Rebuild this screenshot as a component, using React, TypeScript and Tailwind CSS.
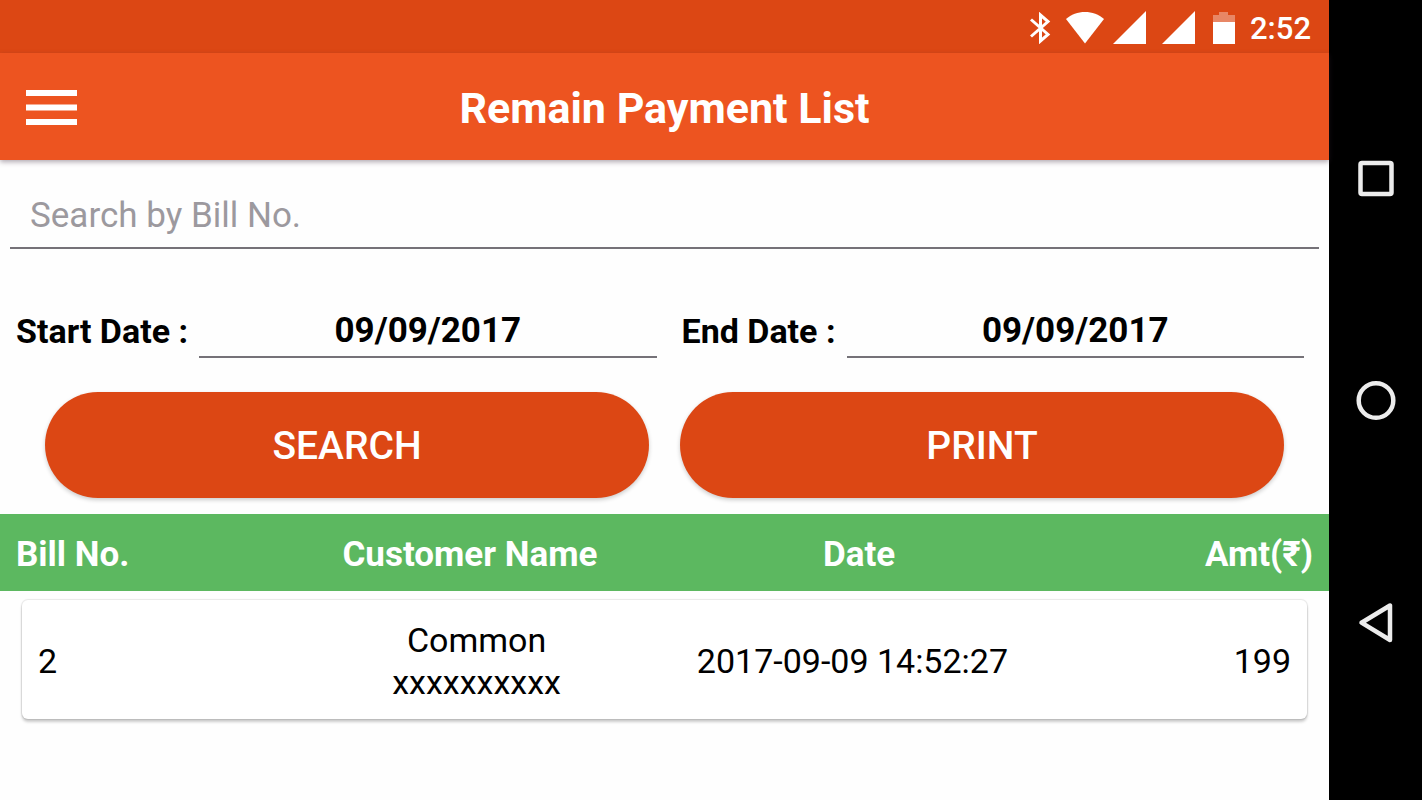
import { useState } from "react";
import type { ReactNode } from "react";

type Bill = { no: string; name: string; phone: string; date: string; amount: string };

const bills: Bill[] = [
  { no: "2", name: "Common", phone: "xxxxxxxxxx", date: "2017-09-09 14:52:27", amount: "199" },
];

function StatusBar() {
  return (
    <div className="flex h-[53px] items-center justify-end bg-[#dc4714] pt-[2px] pr-[18px] text-white">
      <svg className="mr-[14px] h-8 w-[22px]" viewBox="0 0 22 32" fill="none" stroke="currentColor" strokeWidth="3" aria-label="Bluetooth">
        <path d="M2 7.500 19 22.500 11.500 29V3L19 9.500 2 24.500" />
      </svg>
      <svg className="mr-2 h-8 w-10" viewBox="0 0 40 32" fill="currentColor" aria-label="Wi-Fi">
        <path d="M20 31.500 1 7C6 2.500 13 0 20 0s14 2.500 19 7z" />
      </svg>
      <svg className="mr-4 h-[33px] w-[33px]" viewBox="0 0 33 33" fill="currentColor" aria-label="Signal, SIM 1">
        <path d="M0 33 33 0v33z" />
      </svg>
      <svg className="mr-[18px] h-[33px] w-[33px]" viewBox="0 0 33 33" fill="currentColor" aria-label="Signal, SIM 2">
        <path d="M0 33 33 0v33z" />
      </svg>
      <svg className="mr-[15px] h-8 w-[22px]" viewBox="0 0 22 32" fill="currentColor" aria-label="Battery">
        <path fillOpacity="0.35" d="M0 3h6V0h9v3h7v7H0z" />
        <path d="M0 10h22v22H0z" />
      </svg>
      <span className="pt-[2px] text-[31px] leading-[36px] font-medium">2:52</span>
    </div>
  );
}

function AppBar() {
  return (
    <header className="relative z-10 grid h-[107px] grid-cols-[76px_1fr_76px] items-center bg-[#ed5420] pt-[2px] shadow-[0_2px_5px_rgba(60,40,60,0.4)]">
      <button type="button" aria-label="Open menu" className="flex h-full items-center pl-[26px] text-white">
        <svg className="h-[35px] w-[51px] shrink-0" viewBox="0 0 51 35" fill="currentColor">
          <path d="M0 0h51v6H0zM0 14.500h51v6H0zM0 29h51v6H0z" />
        </svg>
      </button>
      <h1 className="text-center text-[43px] leading-[52px] font-bold text-white">Remain Payment List</h1>
    </header>
  );
}

function DateField({ id, label, value, onChange }: { id: string; label: string; value: string; onChange: (v: string) => void }) {
  return (
    <div className="contents">
      <label htmlFor={id} className="text-[34px] font-bold whitespace-nowrap">{label}</label>
      <input
        id={id}
        type="text"
        value={value}
        onChange={(e) => onChange(e.target.value)}
        className="h-[54px] w-0 min-w-0 flex-1 border-b-2 border-[#757278] bg-transparent text-center font-bold outline-none"
      />
    </div>
  );
}

function PillButton({ children }: { children: ReactNode }) {
  return (
    <button type="button" className="h-[106px] flex-1 rounded-full bg-[#dc4714] pt-[2px] text-[39px] font-medium text-white shadow-[0_2px_4px_rgba(0,0,0,0.2)]">
      {children}
    </button>
  );
}

function BillTable() {
  return (
    <table className="mt-4 block w-full">
      <thead className="block bg-[#5cb860] px-4 text-white">
        <tr className="grid h-[77px] grid-cols-[2fr_3fr_3fr_2fr] items-center pt-1">
          <th className="text-left">Bill No.</th>
          <th>Customer Name</th>
          <th>Date</th>
          <th className="text-right">Amt(₹)</th>
        </tr>
      </thead>
      <tbody className="block px-[22px] pt-[9px] text-[34px]">
        {bills.map((b) => (
          <tr key={b.no} className="grid min-h-[119px] grid-cols-[2fr_3fr_3fr_2fr] items-center rounded-md bg-white px-4 pt-[2px] text-center shadow-[0_0_1px_1px_rgba(0,0,0,0.09),0_3px_3px_rgba(0,0,0,0.2)]">
            <td className="text-left">{b.no}</td>
            <td>
              {b.name}
              <br />
              {b.phone}
            </td>
            <td>{b.date}</td>
            <td className="text-right">{b.amount}</td>
          </tr>
        ))}
      </tbody>
    </table>
  );
}

function NavigationBar() {
  return (
    <nav aria-label="System" className="flex w-[93px] shrink-0 flex-col items-center justify-center gap-[174px] bg-black text-[#ececec]">
      <button type="button" aria-label="Recent apps" className="h-12 w-12">
        <svg viewBox="0 0 48 48" fill="none" stroke="currentColor" strokeWidth="4.500">
          <rect x="8.500" y="9" width="31" height="31" rx="1.500" />
        </svg>
      </button>
      <button type="button" aria-label="Home" className="h-12 w-12">
        <svg viewBox="0 0 48 48" fill="none" stroke="currentColor" strokeWidth="4.500">
          <circle cx="24" cy="24.500" r="17.300" />
        </svg>
      </button>
      <button type="button" aria-label="Back" className="h-12 w-12">
        <svg viewBox="0 0 48 48" fill="none" stroke="currentColor" strokeWidth="4.500" strokeLinejoin="round">
          <path d="M38 7.500v34.500L9.500 24.700z" />
        </svg>
      </button>
    </nav>
  );
}

export default function App() {
  const [query, setQuery] = useState("");
  const [start, setStart] = useState("09/09/2017");
  const [end, setEnd] = useState("09/09/2017");

  return (
    <div className="flex min-h-screen bg-[#fefefe] font-[Roboto,sans-serif] text-[35px] leading-[42px] text-black">
      <div className="min-w-0 flex-1">
        <StatusBar />
        <AppBar />
        <main>
          <div className="px-[10px] pt-[23px]">
            <input
              type="text"
              aria-label="Search by Bill No."
              placeholder="Search by Bill No."
              value={query}
              onChange={(e) => setQuery(e.target.value)}
              className="h-[66px] w-full border-b-2 border-[#757278] bg-transparent px-5 outline-none placeholder:text-[#9c999e]"
            />
          </div>
          <div className="mt-[55px] flex items-center gap-[11px] pr-[25px] pl-4">
            <DateField id="start-date" label="Start Date :" value={start} onChange={setStart} />
            <span className="w-[3px]" />
            <DateField id="end-date" label="End Date :" value={end} onChange={setEnd} />
          </div>
          <div className="mt-[34px] flex gap-[31px] px-[45px]">
            <PillButton>SEARCH</PillButton>
            <PillButton>PRINT</PillButton>
          </div>
          <BillTable />
        </main>
      </div>
      <NavigationBar />
    </div>
  );
}
